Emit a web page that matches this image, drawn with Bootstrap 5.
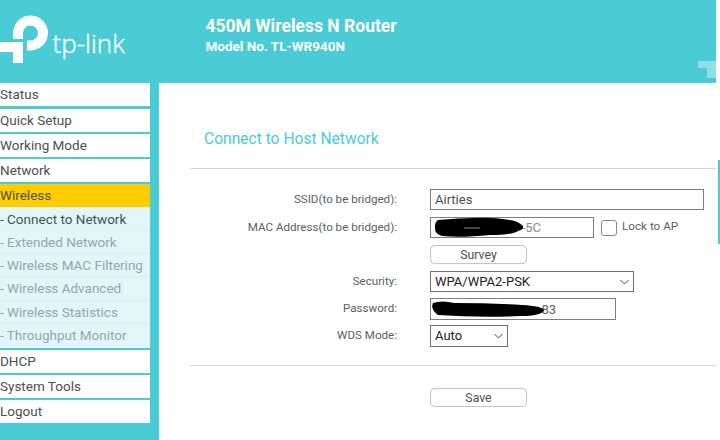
<!DOCTYPE html>
<html lang="en">
<head>
<meta charset="utf-8">
<title>TL-WR940N</title>
<link href="https://cdn.jsdelivr.net/npm/bootstrap@5.3.0/dist/css/bootstrap.min.css" rel="stylesheet">
<style>
html,body{height:100%;overflow:hidden;}
body{font-family:Roboto,"Liberation Sans",sans-serif;font-size:13px;color:#4a4f52;background:#fff;}
.hdr{height:83px;width:716px;background:#4acbd6;color:#fff;position:relative;overflow:hidden;}
.logo-box{width:205.5px;height:83px;flex:none;position:relative;}
.logo-word{position:absolute;left:52.5px;top:25px;font-family:"Open Sans",sans-serif;font-weight:300;font-size:26px;line-height:36px;color:#fff;-webkit-text-stroke:.35px #fff;}
.hdr-title{font-size:17.5px;font-weight:700;line-height:20px;margin-top:16px;}
.hdr-model{font-size:13.5px;font-weight:700;line-height:16px;margin-top:2px;}
.mark-l{position:absolute;right:0;top:61px;}
.shell{height:357px;}
.side{width:159px;flex:none;background:#4acbd6;padding-right:9px;}
.mi{display:block;height:23px;line-height:23px;background:#fff;color:#4a5053;font-size:13.5px;text-decoration:none;margin-bottom:2px;}
.mi:first-child{margin-bottom:3px;}
.mi.on{background:#ffcc00;margin-bottom:0;}
.subs{background:#e2f6f8;margin-bottom:2px;padding:.6px 0;}
.si{display:block;height:23.3px;line-height:23.3px;color:#8fa9ae;font-size:13.5px;text-decoration:none;border-bottom:1px solid #d4f1f4;}
.si:last-child{border-bottom:0;}
.si.on{color:#3e5358;}
.main{flex:1;position:relative;min-width:0;padding:0 4px 0 31px;}
.ttl{color:#4acbd6;font-size:15.6px;font-weight:400;line-height:20px;margin:46px 0 0 14px;}
.rule{height:0;margin:0;border:0;border-top:1px solid #d5d6d6;opacity:1;}
.rule-a{margin-top:19px;}
.rule-b{margin-top:18px;}
.frm{display:grid;grid-template-columns:207px auto;column-gap:33px;align-items:center;justify-items:start;margin-top:20px;}
.lbl{justify-self:end;font-size:11.6px;color:#5a5f62;margin:0;line-height:14px;padding-bottom:2px;}
.ctl{display:flex;align-items:center;position:relative;}
.fld{border:1px solid #7c7f80;border-radius:0;background:#fff;font-family:Roboto,sans-serif;font-size:13px;color:#4a4f52;padding:0 4px;height:21px;outline:0;}
.fld.dim{color:#8a8d8e;}
.fld.mid{color:#5e6264;}
.pick{appearance:none;-webkit-appearance:none;border:1px solid #6f7172;border-radius:0;font-family:Roboto,sans-serif;font-size:13px;color:#222;padding:0 0 0 4px;height:21px;background:#fff url("data:image/svg+xml,%3Csvg xmlns='http://www.w3.org/2000/svg' width='9' height='6'%3E%3Cpath d='M.5 1l4 4 4-4' fill='none' stroke='%23444' stroke-width='1'/%3E%3C/svg%3E") no-repeat right 4px center;}
.btnx{border:1px solid #c3c6c7;border-radius:5px;background:#fff;color:#4a4f52;font-size:12.3px;line-height:16px;padding:0;height:19px;width:97px;box-shadow:0 0 1px #ddd;}
.chk{width:16px;height:16px;border:1px solid #85888a;border-radius:3px;background:#fff;margin-left:7px;flex:none;}
.lock{font-size:11.7px;color:#5a5f62;margin-left:5px;line-height:14px;margin-bottom:3px;}
.mb5{margin-bottom:5px;}
.mb6{margin-bottom:6px;}
.mb7{margin-bottom:7px;}
.blot{position:absolute;left:0;top:0;}
.edge{position:absolute;right:0;top:77px;width:2px;height:84px;background:#4acbd6;}
.save-row{padding-left:240px;margin-top:22px;}
.w-ssid{width:274px;}
.w-mac{width:164px;text-align:right;padding-right:52px;}
.w-sec{width:204px;}
.w-pw{width:186px;height:22px;text-align:right;padding-right:59px;}
.w-wds{width:78px;height:22px;}
</style>
</head>
<body>
<header class="hdr d-flex">
  <div class="logo-box">
    <svg width="52" height="66" viewBox="0 0 52 66" class="position-absolute top-0 start-0" aria-hidden="true">
      <path d="M18 39V33A12.5 12.5 0 1 1 30.5 45.5H27" fill="none" stroke="#fff" stroke-width="10"/>
      <path d="M0 47H18V63" fill="none" stroke="#fff" stroke-width="10"/>
    </svg>
    <span class="logo-word">tp-link</span>
  </div>
  <div>
    <div class="hdr-title">450M Wireless N Router</div>
    <div class="hdr-model">Model No. TL-WR940N</div>
  </div>
  <svg class="mark-l" width="18" height="17" viewBox="0 0 18 17" aria-hidden="true">
    <path d="M0 0H18V17H9V7H0Z" fill="#8fdfe6"/>
  </svg>
</header>
<div class="shell d-flex">
  <nav class="side">
    <a class="mi" href="#">Status</a>
    <a class="mi" href="#">Quick Setup</a>
    <a class="mi" href="#">Working Mode</a>
    <a class="mi" href="#">Network</a>
    <a class="mi on" href="#">Wireless</a>
    <div class="subs">
      <a class="si on" href="#">- Connect to Network</a>
      <a class="si" href="#">- Extended Network</a>
      <a class="si" href="#">- Wireless MAC Filtering</a>
      <a class="si" href="#">- Wireless Advanced</a>
      <a class="si" href="#">- Wireless Statistics</a>
      <a class="si" href="#">- Throughput Monitor</a>
    </div>
    <a class="mi" href="#">DHCP</a>
    <a class="mi" href="#">System Tools</a>
    <a class="mi" href="#">Logout</a>
  </nav>
  <main class="main">
    <h1 class="ttl">Connect to Host Network</h1>
    <hr class="rule rule-a">
    <form class="frm">
      <label class="lbl mb7">SSID(to be bridged):</label>
      <div class="ctl mb7"><input class="fld w-ssid" value="Airties"></div>
      <label class="lbl mb7">MAC Address(to be bridged):</label>
      <div class="ctl mb7">
        <input class="fld dim w-mac" value="-5C">
        <svg class="blot" width="100" height="21" viewBox="0 0 100 21" aria-hidden="true">
          <path d="M8 3Q30 1 44 1Q62 0 80 3Q88 4 93 9Q94 13 88 14Q82 18 60 18Q30 21 12 19Q4 17 5 9Q5 5 8 3Z" fill="#000"/>
          <path d="M34 11H50" stroke="#888" stroke-width="1"/>
        </svg>
        <span class="chk"></span><span class="lock">Lock to AP</span>
      </div>
      <span></span>
      <div class="ctl mb7"><button type="button" class="btnx">Survey</button></div>
      <label class="lbl mb6">Security:</label>
      <div class="ctl mb6"><select class="pick w-sec"><option>WPA/WPA2-PSK</option></select></div>
      <label class="lbl mb5">Password:</label>
      <div class="ctl mb5">
        <input class="fld mid w-pw" value="83">
        <svg class="blot" width="120" height="22" viewBox="0 0 120 22" aria-hidden="true">
          <path d="M3 5Q12 2 24 5Q60 5 92 7Q112 8 114 12Q112 18 90 18Q50 20 8 17Q0 11 3 5Z" fill="#000"/>
        </svg>
      </div>
      <label class="lbl">WDS Mode:</label>
      <div class="ctl"><select class="pick w-wds"><option>Auto</option></select></div>
    </form>
    <hr class="rule rule-b">
    <div class="d-flex save-row"><button type="button" class="btnx">Save</button></div>
    <div class="edge"></div>
  </main>
</div>
<script src="https://cdn.jsdelivr.net/npm/bootstrap@5.3.0/dist/js/bootstrap.bundle.min.js"></script>
</body>
</html>
